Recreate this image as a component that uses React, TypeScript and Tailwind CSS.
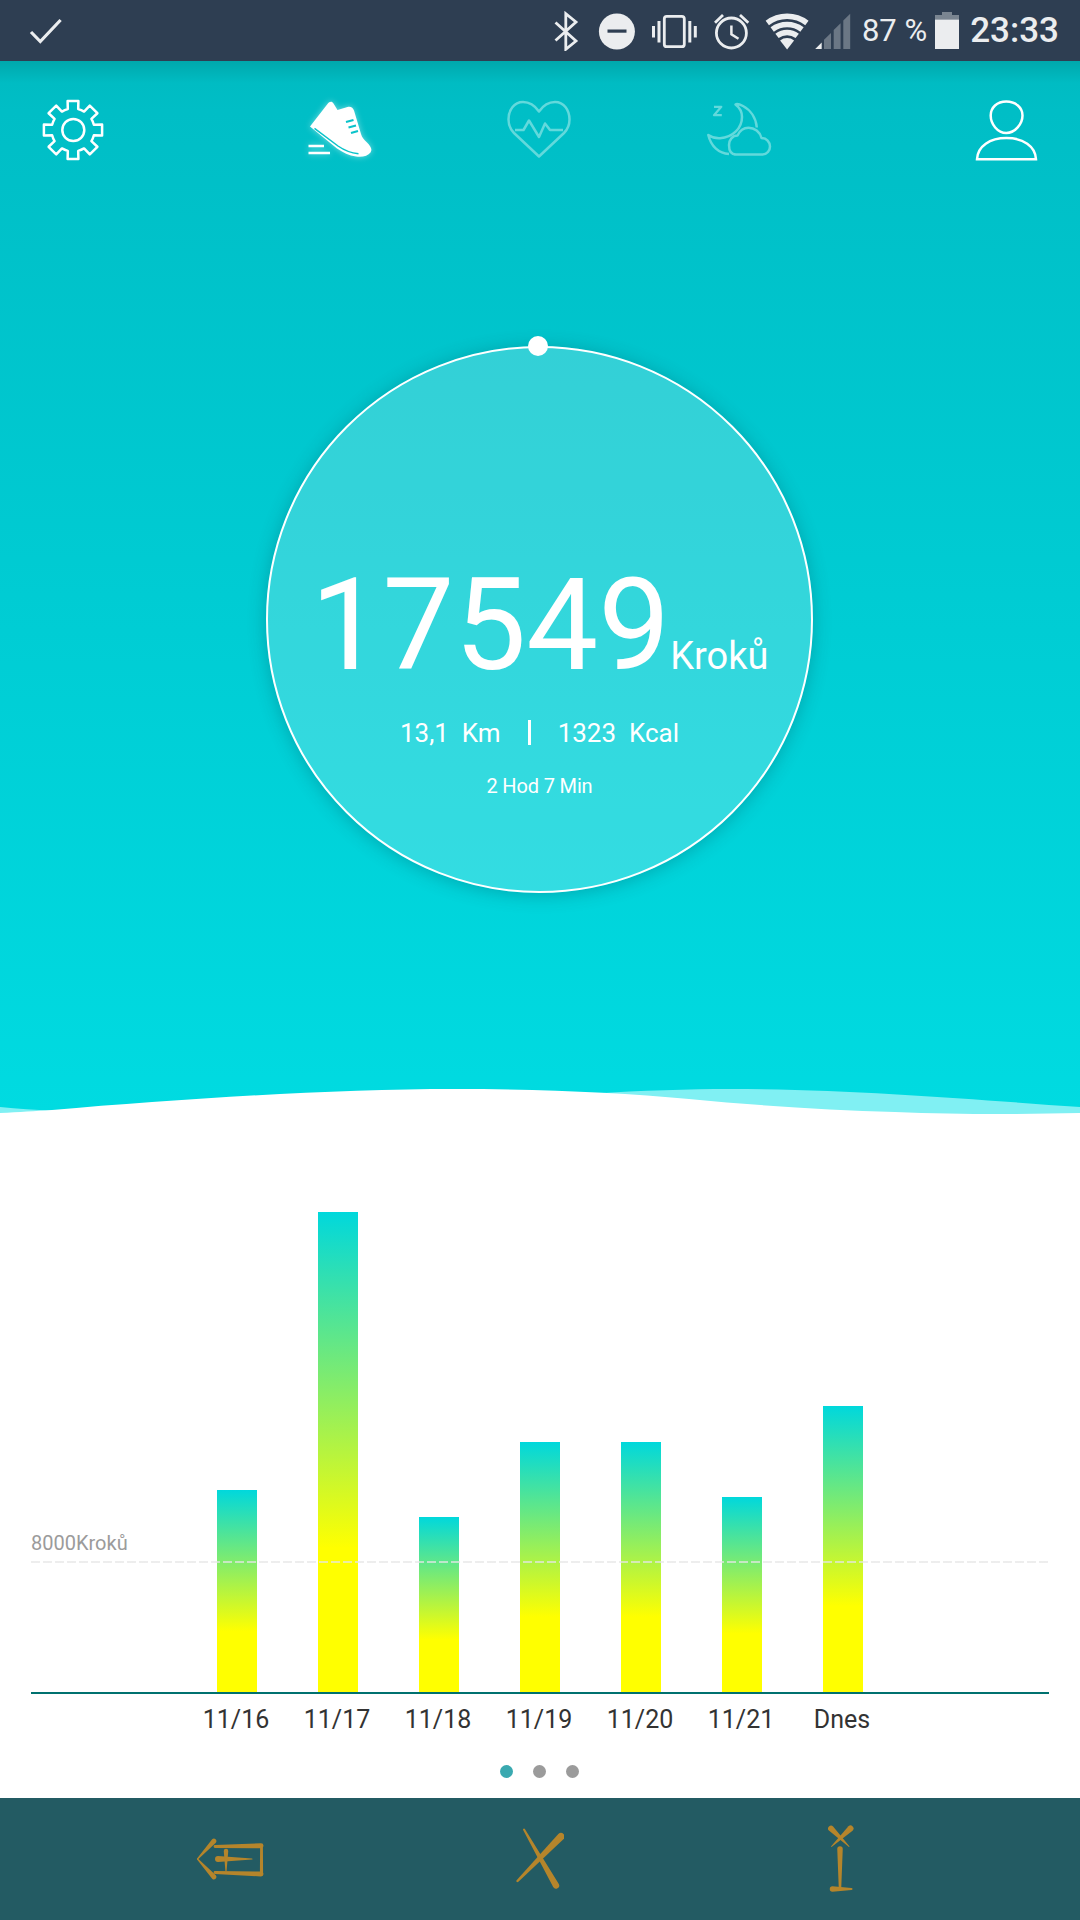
const GOLD = "#b5852b";

function taper(x1: number, y1: number, w1: number, x2: number, y2: number, w2: number) {
  const dx = x2 - x1;
  const dy = y2 - y1;
  const l = Math.hypot(dx, dy);
  const nx = -dy / l;
  const ny = dx / l;
  const a = w1 / 2;
  const b = w2 / 2;
  const f = (n: number) => n.toFixed(2);
  return `M${f(x1 + nx * a)} ${f(y1 + ny * a)} L${f(x2 + nx * b)} ${f(y2 + ny * b)} A${b} ${b} 0 0 0 ${f(x2 - nx * b)} ${f(y2 - ny * b)} L${f(x1 - nx * a)} ${f(y1 - ny * a)} A${a} ${a} 0 0 0 ${f(x1 + nx * a)} ${f(y1 + ny * a)}Z`;
}

function gearPath(cx: number, cy: number) {
  const pt = (r: number, deg: number) => {
    const t = ((deg - 90) * Math.PI) / 180;
    return `${(cx + r * Math.cos(t)).toFixed(2)} ${(cy + r * Math.sin(t)).toFixed(2)}`;
  };
  let d = "";
  const root = 21.5;
  const tip = 29.6;
  for (let i = 0; i < 8; i++) {
    const a = i * 45;
    d += `${i === 0 ? "M" : `A${root} ${root} 0 0 1 `}${pt(root, a - 14)} L${pt(tip, a - 10.5)} L${pt(tip, a + 10.5)} L${pt(root, a + 14)} `;
  }
  d += `A${root} ${root} 0 0 1 ${pt(root, -14)}Z`;
  return d;
}

function StatusIcons() {
  const c = "#ebedef";
  return (
    <>
      <svg className="w-[26px] h-[40px] shrink-0" viewBox="554 10 26 40" fill="none">
        <path d="M555.5 21.5 L576 40 L565.8 48.3 V12.7 L576 21 L555.5 39.5" stroke={c} strokeWidth="2.8" />
      </svg>
      <svg className="w-[38px] h-[40px] ml-[18px] shrink-0" viewBox="597.5 10 38 40">
        <circle cx="616.4" cy="30.5" r="18" fill={c} />
        <rect x="607" y="28.5" width="19" height="3.2" fill="#2e3e52" />
      </svg>
      <svg className="w-[48px] h-[40px] ml-[14.5px] shrink-0" viewBox="650 10 48 40" fill={c}>
        <rect x="663.3" y="15.3" width="20" height="30.4" rx="2.5" fill="none" stroke={c} strokeWidth="2.8" />
        <rect x="651" y="25" width="3" height="11.5" />
        <rect x="656.5" y="20" width="3" height="21.5" />
        <rect x="687.3" y="20" width="3" height="21.5" />
        <rect x="692.8" y="25" width="3" height="11.5" />
      </svg>
      <svg className="w-[38px] h-[40px] ml-[14px] shrink-0" viewBox="712 10 38 40" fill="none" stroke={c}>
        <circle cx="730.4" cy="32" r="15" strokeWidth="2.8" />
        <path d="M714 21.7 L722 14 M739 14 L747.3 21.7" strokeWidth="2.8" />
        <path d="M730.4 24.5 V33.3 L737.5 37.8" strokeWidth="2.5" />
      </svg>
      <svg className="w-[44px] h-[40px] ml-[14.5px] shrink-0" viewBox="764.5 10 44 40" fill="none" stroke={c} strokeWidth="5.5">
        <path d="M766.8 22 A32.9 32.9 0 0 1 806.4 22" />
        <path d="M771.7 28.5 A24.8 24.8 0 0 1 801.5 28.5" />
        <path d="M776.5 34.9 A16.8 16.8 0 0 1 796.7 34.9" />
        <path d="M786.6 48.5 L779.6 39.5 A11.5 11.5 0 0 1 793.6 39.5Z" fill={c} stroke="none" />
      </svg>
      <svg className="w-[38px] h-[40px] ml-[4.5px] shrink-0" viewBox="813 10 38 40">
        <path d="M814.2 48 L820.7 41.5 V48Z" fill={c} />
        <path d="M823 38.8 L830 32 V48 H823Z M832.7 29 L839.6 22.2 V48 H832.7Z M842.3 19.6 L849.2 12.7 V48 H842.3Z" fill="#6b7785" />
      </svg>
      <span className="ml-[10px] text-[31px] leading-[40px] text-[#ebedef] whitespace-nowrap shrink-0">87 %</span>
      <svg className="w-[24px] h-[40px] ml-[8px] shrink-0" viewBox="936 10 24 40">
        <path d="M943 11 H953 V14 H960 V18.5 H936 V14 H943Z" fill="#7a8591" />
        <rect x="936" y="18.5" width="24" height="29.5" fill={c} />
      </svg>
      <span className="ml-[11px] text-[35px] leading-[40px] font-medium text-[#ebedef] whitespace-nowrap shrink-0">23:33</span>
    </>
  );
}

function HeaderIcons() {
  const dim = "#62d9dc";
  return (
    <div className="flex items-start pl-[41px] pt-[34px]">
      <svg className="w-[64px] h-[70px] shrink-0" viewBox="41 95 64 70" fill="none" stroke="#fff" strokeWidth="2.5" strokeLinejoin="round">
        <path d={gearPath(73, 130)} />
        <circle cx="73.3" cy="130" r="11" />
      </svg>
      <svg className="w-[72px] h-[70px] ml-[199px] shrink-0 drop-shadow-[0_0_3px_rgba(255,255,255,0.45)]" viewBox="304 95 72 70" fill="none">
        <path
          d="M310 126.5 L327.5 104 C329.5 101.3 332 101 333.5 103.5 L337.5 110 L347.5 107 C350.5 106 353 107.5 354 110.5 L361 134 C362 137.5 364 139.5 367 142.5 C371 146.5 372.5 149.5 370.5 152.5 C368 156 362 157.5 356 156.5 C349 155.5 343 152.5 337 148.5Z"
          fill="#fff"
        />
        <path d="M314.5 128.3 L338 146 C344.5 150.5 351 153 358.5 153.8" stroke="#0ac3ca" strokeWidth="1.5" />
        <path d="M346 122 L353.5 120 M348.5 127.5 L356 125.5 M351 133 L358 131" stroke="#0ac3ca" strokeWidth="2.2" />
        <path d="M308.5 146 H324 M308.5 153 H330" stroke="#fff" strokeWidth="2.6" />
      </svg>
      <svg className="w-[70px] h-[70px] ml-[128px] shrink-0" viewBox="504 95 70 70" fill="none" stroke={dim} strokeWidth="2.5" strokeLinejoin="round">
        <path d="M539 111.5 C534.5 105 529 102 523 102 C514 102 508.5 110 508.5 119.5 C508.5 125.5 510.5 129.5 514 133 L539 156.5 L564 133 C567.5 129.5 569.5 125.5 569.5 119.5 C569.5 110 564 102 555 102 C549 102 543.5 105 539 111.5Z" />
        <path d="M515 130 H523.5 L529 120.5 L539 137 L545 123.5 L550 130 H563" />
      </svg>
      <svg className="w-[70px] h-[70px] ml-[130px] shrink-0" viewBox="704 95 70 70" fill="none" stroke={dim} strokeWidth="2.5" strokeLinejoin="round">
        <path d="M714 106.8 H721.3 L714 115.2 H721.8" strokeWidth="2.2" />
        <path d="M729 154 C719 153.5 711 146.5 708.3 135 C712 137.5 716 138.5 720 138.3 C733 137.5 742 128 742 117 C742 112 739.5 107.5 735.5 104.5 C737 103.5 740 104.5 743 106 C750.5 110 756 118 756.8 127.5" />
        <path d="M734 154.5 H762.5 C767 154.5 770 150.5 770 146.5 C770 142 766.5 138 761.5 138 C760 132 754.5 127.7 748.5 127.7 C743.5 127.7 739.5 131 737.5 135.5 C732.5 135.5 729 140 729 145 C729 150.5 731 154.5 736 154.5Z" />
      </svg>
      <svg className="w-[70px] h-[70px] ml-[198px] shrink-0" viewBox="972 95 70 70" fill="none" stroke="#fff" strokeWidth="2.5">
        <path d="M1006.3 101.5 C997 101.5 990.7 107.5 990.7 115.5 C990.7 124 997.5 133 1006.3 133 C1015 133 1022.5 124 1022.5 115.5 C1022.5 107.5 1015.5 101.5 1006.3 101.5Z" />
        <path d="M977 159.3 C977.5 146 990 138 1006.5 138 C1023 138 1035.5 146 1036 159.3Z" />
      </svg>
    </div>
  );
}

function Ring() {
  return (
    <div className="relative mt-[180.5px] ml-[266px] w-[547px] h-[547px] rounded-full bg-white/20 border-2 border-white shadow-[0_2px_18px_rgba(0,70,80,0.3)] flex flex-col items-center text-white">
      <span className="absolute -top-[12px] left-[260px] w-[20px] h-[20px] rounded-full bg-white" />
      <div className="flex items-baseline mt-[202px]">
        <span className="text-[128px] leading-[150px] font-normal">17549</span>
        <span className="text-[38px] leading-[40px]">Kroků</span>
      </div>
      <div className="flex items-center mt-[17px] text-[26px] leading-[32px] font-normal whitespace-pre">
        <span>13,1  Km</span>
        <span className="w-[3px] h-[25px] bg-white mx-[27px]" />
        <span>1323  Kcal</span>
      </div>
      <div className="mt-[25px] text-[20px] leading-[24px] font-normal tracking-[-0.15px]">2 Hod 7 Min</div>
    </div>
  );
}

function Wave() {
  return (
    <svg className="absolute left-0 bottom-0 w-[1080px] h-[36px]" viewBox="0 1078 1080 36" preserveAspectRatio="none">
      <path d="M0 1107 C18 1109 35 1110 52 1110.3 V1116 H0Z M580 1116 L595 1093.5 C640 1090.5 690 1089 730 1089 C850 1089 980 1100 1080 1107 V1116Z" fill="#80f0f3" />
      <path d="M0 1113 C20 1112.2 35 1111 52 1110 C180 1099 330 1089 455 1089 C540 1089 620 1092.5 689 1099 C760 1106 830 1110 895 1112 C930 1113.5 965 1114 1000 1114 C1030 1114 1055 1113.5 1080 1113 V1116 H0Z" fill="#fff" />
    </svg>
  );
}

const bars = [
  { h: 202, label: "11/16" },
  { h: 480, label: "11/17" },
  { h: 175, label: "11/18" },
  { h: 250, label: "11/19" },
  { h: 250, label: "11/20" },
  { h: 195, label: "11/21" },
  { h: 286, label: "Dnes" },
];

function Chart() {
  return (
    <div className="px-[31px] pt-[98px]">
      <div className="relative h-[480px]">
        <div className="flex items-end h-full pl-[155.5px]">
          {bars.map((b) => (
            <div key={b.label} className="w-[101px] flex justify-center">
              <div className="w-[40px] bg-[linear-gradient(180deg,#00d8dc_0%,#ffff00_70%,#ffff00_100%)]" style={{ height: b.h }} />
            </div>
          ))}
        </div>
        <span className="absolute left-0 bottom-[137px] text-[20px] leading-[24px] text-[#9b9b9b]">8000Kroků</span>
        <div className="absolute left-0 right-0 bottom-[129px] h-[2px] bg-[repeating-linear-gradient(90deg,rgba(230,230,230,0.7)_0_9px,transparent_9px_12px)]" />
      </div>
      <div className="h-[2px] bg-[#00716f]" />
      <div className="flex pl-[154.5px] mt-[11px]">
        {bars.map((b) => (
          <div key={b.label} className="w-[101px] text-center text-[25px] leading-[30px] text-[#333333]">
            {b.label}
          </div>
        ))}
      </div>
      <div className="flex justify-center gap-[20px] mt-[30px] pr-[2px]">
        <span className="w-[13px] h-[13px] rounded-full bg-[#3aa9b0]" />
        <span className="w-[13px] h-[13px] rounded-full bg-[#9b9b9b]" />
        <span className="w-[13px] h-[13px] rounded-full bg-[#9b9b9b]" />
      </div>
    </div>
  );
}

function BottomBar() {
  return (
    <div className="h-[122px] bg-[#235b63] flex shrink-0">
      <svg className="w-[70px] h-[122px] ml-[195px] shrink-0" viewBox="195 1798 70 122" fill={GOLD}>
        <path d={taper(214, 1841, 5, 197.5, 1859, 1.2)} />
        <path d={taper(214, 1877, 5, 197.5, 1859, 1.2)} />
        <path d={taper(261, 1845.7, 5, 215, 1846.5, 2.8)} />
        <path d={taper(261, 1874, 5, 215, 1872.5, 2.8)} />
        <path d={taper(261.5, 1845.7, 2.8, 261.5, 1874, 3.2)} />
        <path d={taper(218, 1859, 6, 252, 1859, 1)} />
        <path d={taper(226, 1851, 4.5, 226, 1871, 1.2)} />
      </svg>
      <svg className="w-[50px] h-[122px] ml-[249px] shrink-0" viewBox="514 1798 50 122" fill={GOLD}>
        <path d={taper(556, 1885.5, 6.5, 524, 1829.5, 2)} />
        <path d={taper(561, 1836.5, 7.5, 517.5, 1881, 2.5)} />
      </svg>
      <svg className="w-[26px] h-[122px] ml-[264px] shrink-0" viewBox="828 1798 26 122" fill={GOLD}>
        <path d={taper(831, 1828.5, 6, 849, 1846.5, 1)} />
        <path d={taper(850.5, 1828.5, 6, 831.5, 1846.5, 1)} />
        <path d={taper(840, 1849, 5.5, 840, 1888, 2.5)} />
        <path d={taper(832.5, 1889, 5.5, 851.5, 1889, 2)} />
      </svg>
    </div>
  );
}

export default function App() {
  return (
    <div className="w-[1080px] h-[1920px] flex flex-col overflow-hidden bg-white font-[Roboto,sans-serif]">
      <div className="h-[61px] bg-[#2e3e52] flex items-center shrink-0 pl-[28px] pr-[21px]">
        <svg className="w-[36px] h-[28px] shrink-0" viewBox="28 17 36 28" fill="none">
          <path d="M31 32 L40.3 41.5 L60.6 20" stroke="#ebedef" strokeWidth="3.2" />
        </svg>
        <div className="ml-auto flex items-center">
          <StatusIcons />
        </div>
      </div>
      <div className="relative h-[1053px] shrink-0 bg-[linear-gradient(180deg,#00a8ac_0px,#00bcc3_22px,#00bec6_50px,#00dbe1_1053px)]">
        <HeaderIcons />
        <Ring />
        <Wave />
      </div>
      <div className="flex-1">
        <Chart />
      </div>
      <BottomBar />
    </div>
  );
}
